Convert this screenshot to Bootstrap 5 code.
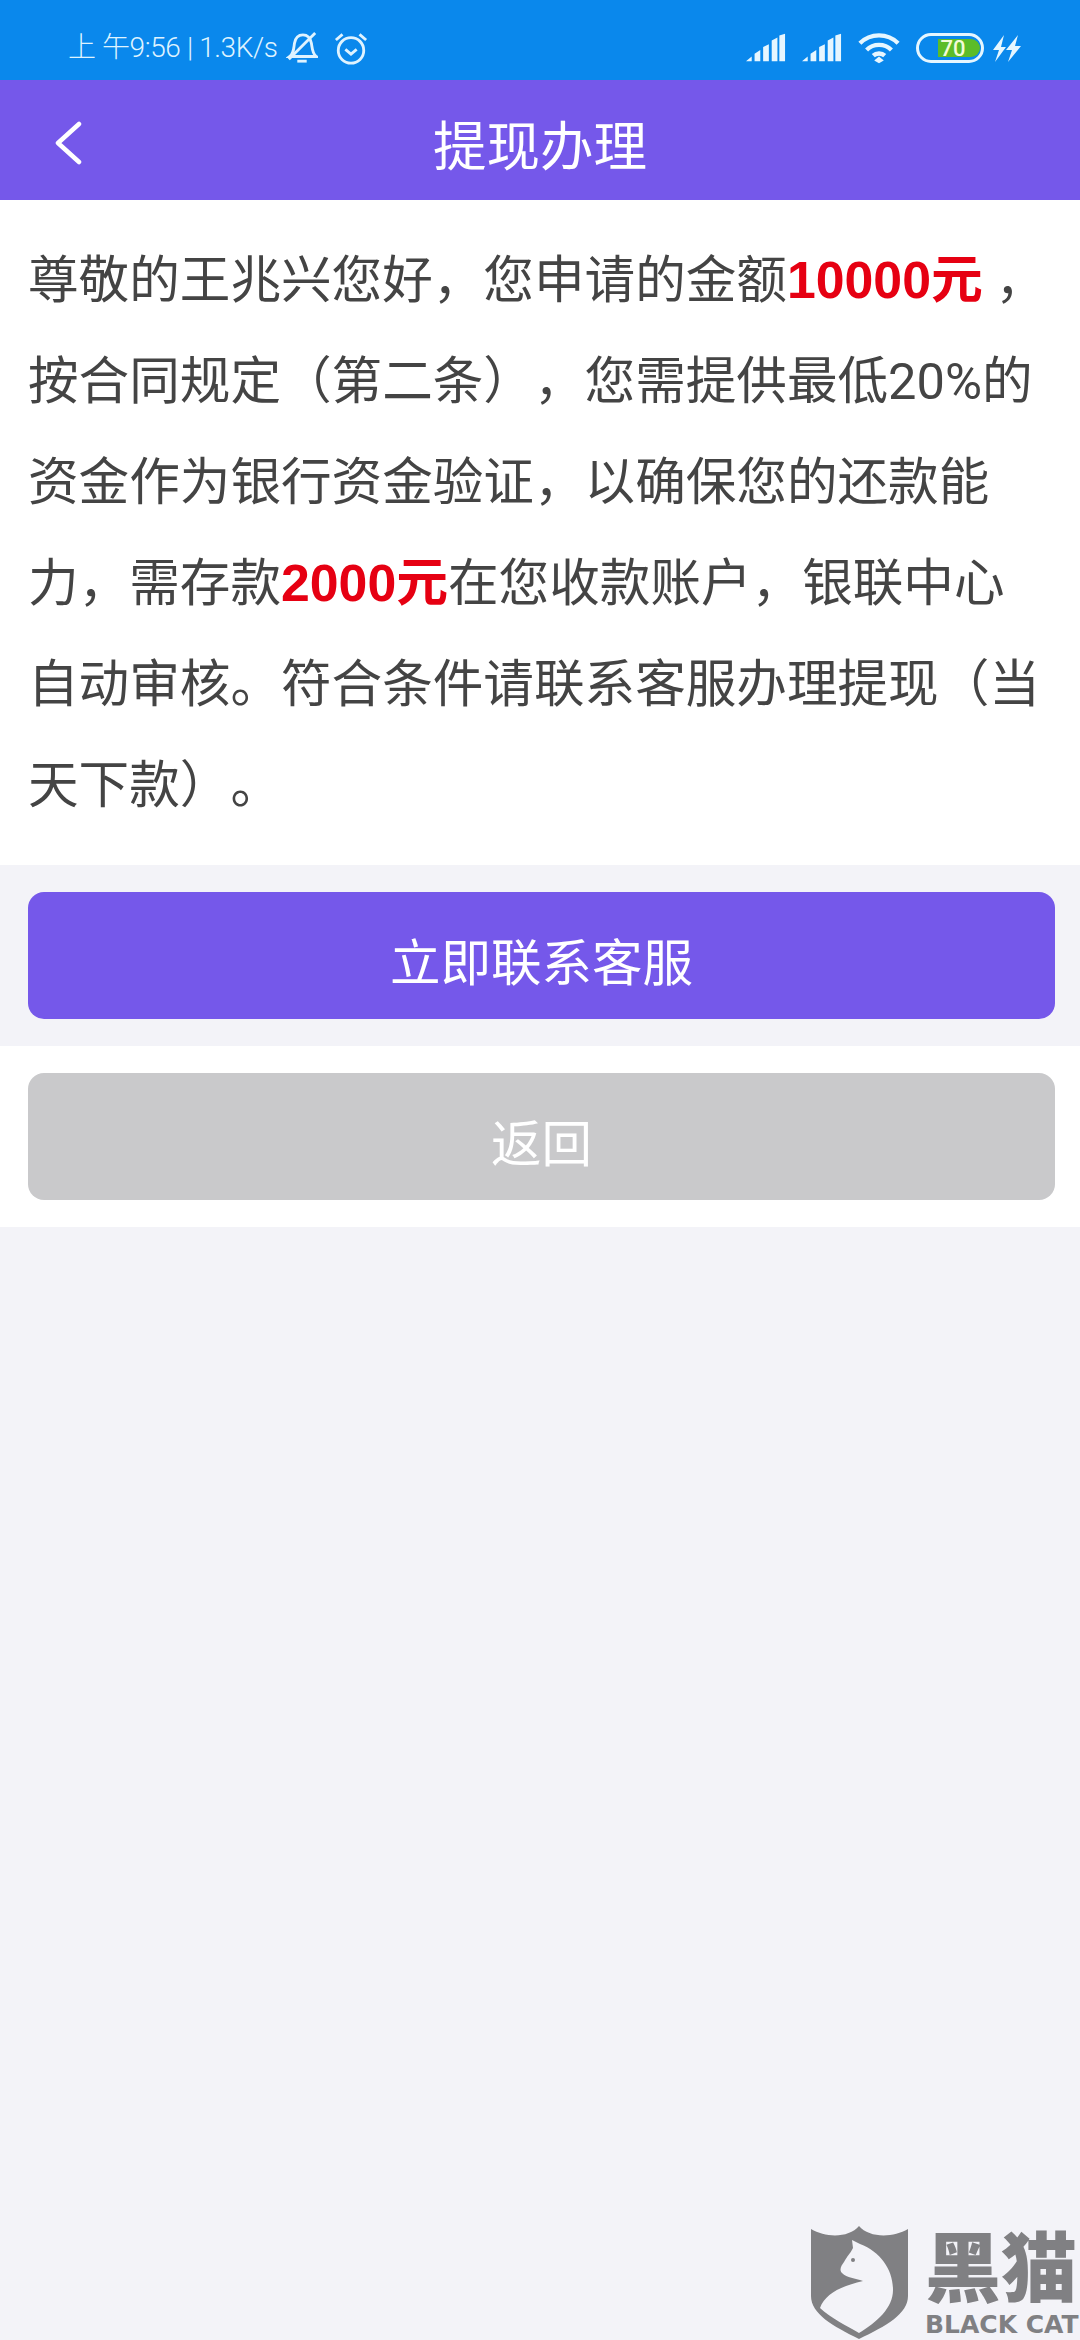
<!DOCTYPE html>
<html lang="zh">
<head>
  <meta charset="UTF-8">
  <meta name="viewport" content="width=device-width, initial-scale=1.0">
  <title>提现办理</title>
  <link href="https://cdn.jsdelivr.net/npm/bootstrap@5.3.3/dist/css/bootstrap.min.css" rel="stylesheet">
  <style>
    body {
      background: #f3f3f8;
      min-height: 2340px;
      overflow-x: hidden;
      font-family: "Roboto", "Noto Sans CJK SC", sans-serif;
      text-spacing-trim: space-all;
    }
    .status-bar {
      height: 80px;
      background: #0a88ec;
      color: #dff3ff;
      padding: 16px 58px 0 68px;
    }
    .status-text {
      font-size: 28px;
      font-weight: 300;
      letter-spacing: -.4px;
      line-height: 1;
      white-space: nowrap;
    }
    .top-bar {
      height: 120px;
      padding-top: 16px;
      background: #7558ea;
      color: #fff;
      font-size: 53.5px;
      line-height: 1;
    }
    .back-arrow {
      left: 54px;
      top: 41px;
    }
    .notice {
      background: #fff;
      color: #444;
      font-size: 50.6px;
      line-height: 101px;
      padding: 30px 0 29px 28px;
      white-space: nowrap;
    }
    .notice b {
      color: #e60012;
      font-family: "Liberation Sans", "Noto Sans CJK SC", sans-serif;
      font-size: 51.8px;
      font-weight: 700;
    }
    .btn-wrap {
      padding: 27px 25px 27px 28px;
    }
    .btn-wrap .btn {
      height: 127px;
      padding-top: 23px;
      font-size: 50.5px;
      line-height: 1;
      color: #fff;
      border: 0;
      border-radius: 16px;
    }
    .btn-contact { background: #7558ea; }
    .btn-back { background: #c9c9cb; }
    .wm-box {
      right: 0;
      bottom: 0;
      width: 269px;
      height: 114px;
      color: #808083;
    }
    .wm-cn {
      left: 114px;
      top: 6px;
      font-size: 76px;
      font-weight: 900;
      line-height: 1;
      white-space: nowrap;
    }
    .wm-en {
      left: 114px;
      top: 86px;
      font-family: "DejaVu Sans", sans-serif;
      font-size: 25px;
      font-weight: 700;
      line-height: 1;
      white-space: nowrap;
    }
  </style>
</head>
<body class="position-relative">
  <div class="status-bar d-flex align-items-center justify-content-between">
    <div class="d-flex align-items-center">
      <span class="status-text">上 午9:56 | 1.3K/s</span>
      <svg class="ms-2" width="32" height="34" viewBox="0 0 34 36" fill="none" stroke="#dff3ff" stroke-width="3">
        <path d="M4 27c4-3 4-7 5-14 1-6 4-9 9-9s8 4 9 9c1 6 1 11 5 14z"/>
        <path d="M12 32h10"/>
        <path d="M3 30L31 2"/>
      </svg>
      <svg class="ms-3" width="34" height="35" viewBox="0 0 36 36" fill="none" stroke="#dff3ff" stroke-width="3">
        <circle cx="18" cy="20" r="13.5"/>
        <path d="M12 19l6 5 6-5"/>
        <path d="M2 9l7-6M34 9l-7-6"/>
      </svg>
    </div>
    <div class="d-flex align-items-center">
      <svg width="40" height="30" viewBox="0 0 42 30" fill="#e6f6ff">
        <path d="M0 29l6-5v5zM9 21l6-4v12H9zM18 14l6-3v18h-6zM27 7l6-3v25h-6zM35 2l6-2v29h-6z"/>
      </svg>
      <svg class="ms-3" width="40" height="30" viewBox="0 0 42 30" fill="#e6f6ff">
        <path d="M0 29l6-5v5zM9 21l6-4v12H9zM18 14l6-3v18h-6zM27 7l6-3v25h-6zM35 2l6-2v29h-6z"/>
      </svg>
      <svg class="ms-3" width="42" height="32" viewBox="0 0 44 32" fill="none" stroke="#e6f6ff" stroke-width="4.5">
        <path d="M2 11c11-11 29-11 40 0"/>
        <path d="M9 18c7-7 19-7 26 0"/>
        <path d="M16 24c3-3 9-3 12 0"/>
        <path d="M22 25l5 4-5 3-5-3z" fill="#e6f6ff" stroke="none"/>
      </svg>
      <svg class="ms-3" width="68" height="30" viewBox="0 0 68 30">
        <rect x="1.5" y="1.5" width="65" height="27" rx="13.5" fill="none" stroke="#e6f6ff" stroke-width="3"/>
        <path d="M22 6h33a9 9 0 0 1 0 18H22z" fill="#5cbc28"/>
        <text x="37" y="23" text-anchor="middle" font-family="Roboto, sans-serif" font-size="22" font-weight="500" fill="#f2fbd8">70</text>
      </svg>
      <svg class="ms-2" width="30" height="30" viewBox="0 0 30 30" fill="#e6f6ff">
        <path d="M12 2L1 17h6L3 29l11-15H9zM26 2L14 17h6l-4 12 13-16h-6z"/>
      </svg>
    </div>
  </div>

  <div class="top-bar position-relative d-flex align-items-center justify-content-center">
    <svg class="back-arrow position-absolute" width="28" height="44" viewBox="0 0 28 44" fill="none" stroke="#fff" stroke-width="4.5" stroke-linecap="round" stroke-linejoin="round">
      <path d="M25 3L4 22l21 19"/>
    </svg>
    <span>提现办理</span>
  </div>

  <div class="notice">
    尊敬的王兆兴您好，您申请的金额<b>10000元</b> ，<br>
    按合同规定（第二条），您需提供最低20%的<br>
    资金作为银行资金验证，以确保您的还款能<br>
    力，需存款<b>2000元</b>在您收款账户，银联中心<br>
    自动审核。符合条件请联系客服办理提现（当<br>
    天下款）。
  </div>

  <div class="btn-wrap">
    <button type="button" class="btn btn-contact w-100">立即联系客服</button>
  </div>
  <div class="btn-wrap bg-white">
    <button type="button" class="btn btn-back w-100">返回</button>
  </div>

  <div class="wm-box position-absolute">
    <svg class="d-block" width="97" height="114" viewBox="0 0 97 114">
      <path d="M0 3C15 12 38 12 48 0 58 12 82 12 97 3V70C97 88 75 100 48 113 22 100 0 88 0 70Z" fill="#808083"/>
      <path d="M41 14l8 4C70 26 82 44 82 64 82 82 66 96 48 107 36 100 20 92 9 82 14 68 30 60 52 55 44 52 36 52 31 47 28 44 30 40 33 36 36 30 39 28 42 22Z" fill="#f3f3f8"/>
      <circle cx="42" cy="34" r="2" fill="#808083"/>
    </svg>
    <span class="wm-cn position-absolute">黑猫</span>
    <span class="wm-en position-absolute">BLACK CAT</span>
  </div>

  <script src="https://cdn.jsdelivr.net/npm/bootstrap@5.3.3/dist/js/bootstrap.bundle.min.js"></script>
</body>
</html>
